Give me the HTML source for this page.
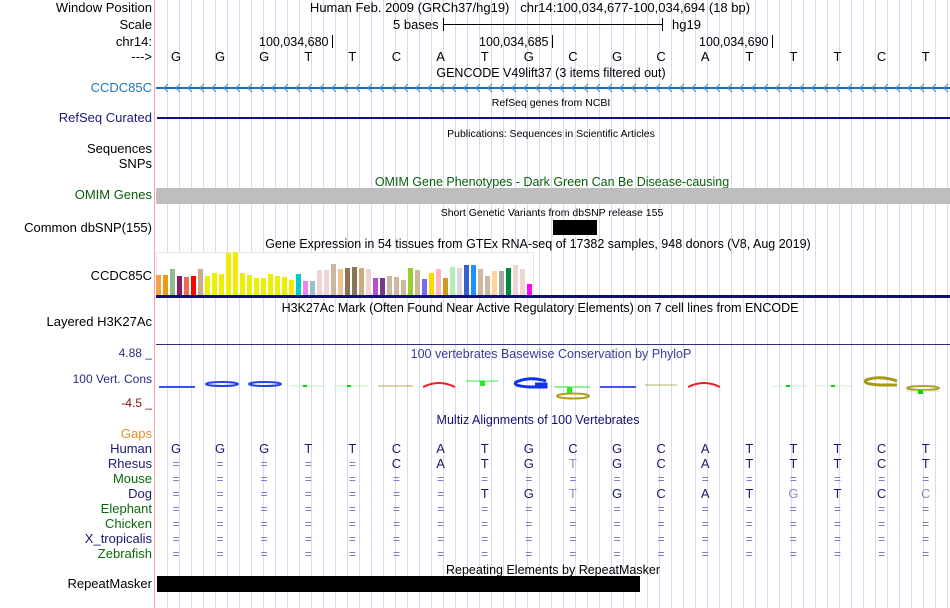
<!DOCTYPE html>
<html><head><meta charset="utf-8"><style>
body{margin:0;width:950px;height:608px;overflow:hidden;background:#fff;font-family:"Liberation Sans",Arial,sans-serif;position:relative}
#grid{position:absolute;left:156px;top:0;width:794px;height:608px;background:repeating-linear-gradient(to right,transparent 0,transparent 11px,#d9d9f5 11px,#d9d9f5 12px)}
#red{position:absolute;left:154px;top:0;width:1px;height:608px;background:#f4a4a4}
.l{position:absolute;right:798px;font-size:13px;line-height:16px;white-space:nowrap;color:#000}
.t{position:absolute;font-size:12.5px;line-height:16px;white-space:nowrap;transform:translateX(-50%)}
.s{position:absolute;font-size:10.5px;line-height:14px;white-space:nowrap;transform:translateX(-50%)}
.b{position:absolute;font-size:13px;line-height:16px;transform:translateX(-50%)}
.abs{position:absolute}
</style></head><body>
<div id="grid"></div><div id="red"></div>

<div class="l" style="top:0">Window Position</div>
<div class="l" style="top:17px">Scale</div>
<div class="l" style="top:34px">chr14:</div>
<div class="l" style="top:49px">---&gt;</div>
<div class="l" style="top:80px;color:#1f78c0">CCDC85C</div>
<div class="l" style="top:110px;color:#1a1a80">RefSeq Curated</div>
<div class="l" style="top:141px">Sequences</div>
<div class="l" style="top:156px">SNPs</div>
<div class="l" style="top:187px;color:#0a5e0a">OMIM Genes</div>
<div class="l" style="top:220px">Common dbSNP(155)</div>
<div class="l" style="top:268px">CCDC85C</div>
<div class="l" style="top:314px">Layered H3K27Ac</div>
<div class="l" style="top:345px;color:#2a2a80;font-size:12px">4.88 _</div>
<div class="l" style="top:371px;color:#2a2a80;font-size:12px">100 Vert. Cons</div>
<div class="l" style="top:395px;color:#7a1010;font-size:12px">-4.5 _</div>
<div class="l" style="top:426px;color:#e8902a">Gaps</div>
<div class="l" style="top:441px;color:#1a1a70">Human</div>
<div class="l" style="top:456px;color:#1a1a70">Rhesus</div>
<div class="l" style="top:471px;color:#0a6a0a">Mouse</div>
<div class="l" style="top:486px;color:#1a1a70">Dog</div>
<div class="l" style="top:501px;color:#0a6a0a">Elephant</div>
<div class="l" style="top:516px;color:#0a6a0a">Chicken</div>
<div class="l" style="top:531px;color:#1a1a70">X_tropicalis</div>
<div class="l" style="top:546px;color:#0a6a0a">Zebrafish</div>
<div class="l" style="top:576px">RepeatMasker</div>

<div class="t" style="left:530px;top:0;font-size:13px">Human Feb. 2009 (GRCh37/hg19) &nbsp; chr14:100,034,677-100,034,694 (18 bp)</div>
<div class="abs" style="left:393px;top:17px;font-size:13px;line-height:16px">5 bases</div>
<div class="abs" style="left:443px;top:24px;width:219px;height:1px;background:#000"></div>
<div class="abs" style="left:443px;top:18px;width:1px;height:13px;background:#000"></div>
<div class="abs" style="left:662px;top:18px;width:1px;height:13px;background:#000"></div>
<div class="abs" style="left:672px;top:17px;font-size:13px;line-height:16px">hg19</div>
<div class="abs" style="left:259px;top:34px;font-size:12.5px;line-height:16px">100,034,680</div>
<div class="abs" style="left:332px;top:35px;width:1px;height:13px;background:#000"></div>
<div class="abs" style="left:479px;top:34px;font-size:12.5px;line-height:16px">100,034,685</div>
<div class="abs" style="left:552px;top:35px;width:1px;height:13px;background:#000"></div>
<div class="abs" style="left:699px;top:34px;font-size:12.5px;line-height:16px">100,034,690</div>
<div class="abs" style="left:772px;top:35px;width:1px;height:13px;background:#000"></div>

<div id="bases"></div>

<div class="t" style="left:551px;top:65px">GENCODE V49lift37 (3 items filtered out)</div>
<svg class="abs" style="left:156px;top:82px" width="794" height="12"><line x1="0" y1="6" x2="794" y2="6" stroke="#1f6fb0" stroke-width="2"/>
<g id="arr" stroke="#3a8ad0" fill="none" stroke-width="1"></g></svg>
<div class="s" style="left:551px;top:96px">RefSeq genes from NCBI</div>
<div class="abs" style="left:157px;top:117px;width:793px;height:2px;background:#101080"></div>
<div class="s" style="left:551px;top:127px">Publications: Sequences in Scientific Articles</div>
<div class="t" style="left:552px;top:174px;color:#0a5e0a">OMIM Gene Phenotypes - Dark Green Can Be Disease-causing</div>
<div class="abs" style="left:156px;top:188px;width:794px;height:16px;background:#bebebe"></div>
<div class="s" style="left:552px;top:206px">Short Genetic Variants from dbSNP release 155</div>
<div class="abs" style="left:553px;top:220px;width:44px;height:15px;background:#000"></div>
<div class="t" style="left:538px;top:236px">Gene Expression in 54 tissues from GTEx RNA-seq of 17382 samples, 948 donors (V8, Aug 2019)</div>
<div class="abs" style="left:156px;top:252px;width:378px;height:42px;border:1px solid #e8e8e8;box-sizing:border-box;background:#fff"></div>
<svg class="abs" style="left:0;top:0" width="950" height="300" id="gx"></svg>
<div class="abs" style="left:156px;top:295px;width:794px;height:3px;background:#101070"></div>
<div class="t" style="left:540px;top:300px">H3K27Ac Mark (Often Found Near Active Regulatory Elements) on 7 cell lines from ENCODE</div>
<div class="abs" style="left:156px;top:344px;width:794px;height:1px;background:#303078"></div>
<div class="t" style="left:551px;top:346px;color:#3a3a9a">100 vertebrates Basewise Conservation by PhyloP</div>

<svg class="abs" style="left:0;top:370px" width="950" height="40">
<g fill="none" stroke-width="2">
<line x1="159" y1="17" x2="195" y2="17" stroke="#3355ee"/>
<ellipse cx="222" cy="14" rx="16" ry="2" stroke="#2244ee"/>
<ellipse cx="265" cy="14" rx="16" ry="2" stroke="#2244ee"/>
<line x1="290" y1="16" x2="325" y2="16" stroke="#bff0bf" stroke-width="1"/><rect x="303" y="15" width="4" height="2" fill="#00dd00" stroke="none"/>
<line x1="334" y1="16" x2="369" y2="16" stroke="#bff0bf" stroke-width="1"/><rect x="347" y="15" width="4" height="2" fill="#00dd00" stroke="none"/>
<line x1="378" y1="16" x2="413" y2="16" stroke="#b8a850" stroke-width="1"/>
<path d="M423 17 Q439 9 455 17" stroke="#ee2020"/>
<line x1="466" y1="11" x2="498" y2="11" stroke="#33ee33" stroke-width="1"/><rect x="480" y="11" width="5" height="5" fill="#22ee22" stroke="none"/>
<path d="M546 11 Q530 6 516 12 Q512 16 530 17 L546 17 L546 14 L535 14" stroke="#1133ee" stroke-width="3"/>
<line x1="554" y1="17" x2="590" y2="17" stroke="#22ee22" stroke-width="1"/><rect x="567" y="17" width="5" height="7" fill="#22ee22" stroke="none"/>
<ellipse cx="573" cy="26" rx="16" ry="2.5" stroke="#b0a020"/>
<line x1="600" y1="17" x2="636" y2="17" stroke="#4455ee"/>
<line x1="645" y1="15" x2="677" y2="15" stroke="#b8b060" stroke-width="1"/>
<path d="M688 17 Q704 9 720 17" stroke="#ee2020"/>
<line x1="773" y1="16" x2="808" y2="16" stroke="#d0f0d0" stroke-width="1"/><rect x="786" y="15" width="4" height="2" fill="#00dd00" stroke="none"/>
<line x1="817" y1="16" x2="851" y2="16" stroke="#d0f0d0" stroke-width="1"/><rect x="831" y="15" width="4" height="2" fill="#00dd00" stroke="none"/>
<path d="M897 11 Q880 5 866 10 Q862 14 880 15 L897 15" stroke="#a89a10" stroke-width="3"/>
<ellipse cx="923" cy="18" rx="16" ry="2" stroke="#b0a030"/><line x1="906" y1="21" x2="940" y2="21" stroke="#bfeebf" stroke-width="1"/><rect x="918" y="20" width="5" height="4" fill="#00dd00" stroke="none"/>
</g></svg>

<div class="t" style="left:538px;top:412px;color:#101078">Multiz Alignments of 100 Vertebrates</div>
<div id="mz"></div>
<div class="t" style="left:553px;top:562px">Repeating Elements by RepeatMasker</div>
<div class="abs" style="left:157px;top:576px;width:483px;height:16px;background:#000"></div>

<script>
(function(){
var X=[];for(var i=0;i<18;i++)X.push(176+44.1*i);
var seq="GGGTTCATGCGCATTTCT",h="";
for(var i=0;i<18;i++)h+='<div class="b" style="left:'+X[i]+'px;top:49px">'+seq.charAt(i)+'</div>';
document.getElementById('bases').innerHTML=h;
var a="";for(var x=8;x<794;x+=12)a+='<path d="M'+(x+4)+' 2 L'+x+' 6 L'+(x+4)+' 10"/>';
document.getElementById('arr').innerHTML=a;
var ys=[275,275,269,276,277,276,269,276,273,274,253,252,273,275,278,278,274,276,277,280,274,281,281,270,270,264,269,268,267,268,269,278,278,276,277,280,268,270,279,273,269,278,267,268,265,265,269,276,271,271,268,265,269,284];
var cs=["#f5a04a","#ee9a10","#8fbc8f","#8b1c62","#ee6a50","#ff0000","#c9ab90","#eeee00","#eeee00","#eeee00","#eeee00","#eeee00","#eeee00","#eeee00","#eeee00","#eeee00","#eeee00","#eeee00","#eeee00","#eeee00","#00cdcd","#ee82ee","#9ac0cd","#eed5d2","#eed5d2","#cdb79e","#eec591","#8b7355","#8b7355","#cdaa7d","#eed5d2","#b452cd","#7a378b","#cdb79e","#cdb79e","#cdb79e","#9acd32","#cdb79e","#7b68ee","#ffd700","#ffb6c1","#cd9b1d","#b4eeb4","#d9d9d9","#3a5fcd","#1e90ff","#cdb79e","#cdb79e","#ffd39b","#a6a6a6","#008b45","#eed5d2","#eed5d2","#ff00ff"];
var g="";for(var i=0;i<54;i++)g+='<rect x="'+(156+7*i)+'" y="'+ys[i]+'" width="5" height="'+(295-ys[i])+'" fill="'+cs[i]+'"/>';
document.getElementById('gx').innerHTML=g;
var rows=["GGGTTCATGCGCATTTCT","=====CATGtGCATTTCT","==================","=======TGtGCATgTCc","==================","==================","==================","=================="];
var m="";for(var r=0;r<8;r++)for(var i=0;i<18;i++){var c=rows[r].charAt(i),y=441+15*r;
if(c=="=")m+='<div class="b" style="left:'+X[i]+'px;top:'+y+'px;color:#7070b8;font-size:12px">=</div>';
else{var gr=(c==c.toLowerCase());m+='<div class="b" style="left:'+X[i]+'px;top:'+y+'px;color:'+(gr?'#9090b8':'#1a1a6a')+'">'+c.toUpperCase()+'</div>';}}
document.getElementById('mz').innerHTML=m;
})();
</script>
</body></html>
